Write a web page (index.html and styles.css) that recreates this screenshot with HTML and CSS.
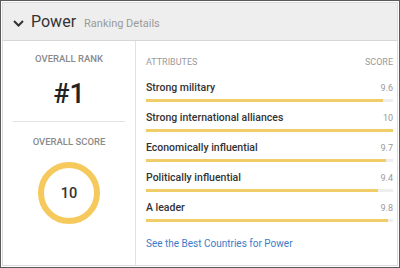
FILE: index.html
```html
<!DOCTYPE html>
<html lang="en">
<head>
  <meta charset="UTF-8" />
  <title>Power Ranking Details</title>
  <link rel="stylesheet" href="styles.css">
</head>
<body>
  <div class="frame">
    <div class="panel">

      <!-- HEADER -->
      <div class="panel-header">
        <svg class="chevron" width="11" height="7" viewBox="0 0 11 7">
          <polyline points="1,1 5.5,5.5 10,1" fill="none" stroke="#333" stroke-width="2"/>
        </svg>
        <span class="title">Power</span>
        <span class="subtitle">Ranking Details</span>
      </div>

      <div class="panel-body">
        <!-- LEFT SIDE -->
        <div class="summary">
          <div class="summary-block">
            <div class="label">Overall Rank</div>
            <div class="rank">#1</div>
          </div>
          <div class="summary-block score-block">
            <div class="label">Overall Score</div>
            <div class="ring">10</div>
          </div>
        </div>

        <!-- RIGHT SIDE -->
        <div class="attributes">
          <div class="attr-head">
            <span>Attributes</span>
            <span>Score</span>
          </div>

          <div class="attr">
            <div class="attr-row"><span class="attr-name">Strong military</span><span class="attr-score">9.6</span></div>
            <div class="bar"><div class="fill" style="width: 96%"></div></div>
          </div>
          <div class="attr">
            <div class="attr-row"><span class="attr-name">Strong international alliances</span><span class="attr-score">10</span></div>
            <div class="bar"><div class="fill" style="width: 100%"></div></div>
          </div>
          <div class="attr">
            <div class="attr-row"><span class="attr-name">Economically influential</span><span class="attr-score">9.7</span></div>
            <div class="bar"><div class="fill" style="width: 97%"></div></div>
          </div>
          <div class="attr">
            <div class="attr-row"><span class="attr-name">Politically influential</span><span class="attr-score">9.4</span></div>
            <div class="bar"><div class="fill" style="width: 94%"></div></div>
          </div>
          <div class="attr">
            <div class="attr-row"><span class="attr-name">A leader</span><span class="attr-score">9.8</span></div>
            <div class="bar"><div class="fill" style="width: 98%"></div></div>
          </div>

          <a class="more-link" href="#">See the Best Countries for Power</a>
        </div>
      </div>

    </div>
  </div>
</body>
</html>
```

FILE: styles.css
```css
* {
  box-sizing: border-box;
}

body {
  margin: 0;
  font-family: Roboto, 'Noto Sans', sans-serif;
  background: #fff;
}

.frame {
  width: 400px;
  height: 268px;
  border: 1px solid #5a5a5a;
  padding: 1px;
  background: #fff;
}

.panel {
  height: 100%;
  border: 1px solid #dcdcdc;
  display: flex;
  flex-direction: column;
}

.panel-header {
  height: 38px;
  background: #eeeeee;
  border-bottom: 1px solid #d6d6d6;
  display: flex;
  align-items: baseline;
  padding: 9px 0 0 9px;
}

.chevron {
  align-self: center;
  margin: -6px 7px 0 1px;
}

.title {
  font-size: 16px;
  color: #333;
  margin-right: 8px;
}

.subtitle {
  font-size: 11px;
  color: #9a9a9a;
}

.panel-body {
  flex: 1;
  display: flex;
}

.summary {
  width: 133px;
  border-right: 1px solid #e2e2e2;
  padding: 0 10px;
}

.summary-block {
  text-align: center;
  padding-top: 12px;
}

.summary-block:first-child {
  height: 81px;
  border-bottom: 1px solid #e2e2e2;
}

.label {
  font-size: 9.5px;
  font-weight: 500;
  text-transform: uppercase;
  color: #8a8a8a;
}

.rank {
  font-size: 27px;
  font-weight: 500;
  color: #222;
  margin-top: 14px;
}

.score-block {
  padding-top: 14px;
}

.ring {
  width: 62px;
  height: 62px;
  margin: 15px auto 0;
  border: 6px solid #f5c95c;
  border-radius: 50%;
  display: flex;
  align-items: center;
  justify-content: center;
  font-size: 14.5px;
  font-weight: 500;
  color: #333;
}

.attributes {
  flex: 1;
  padding: 16px 4px 0 10px;
}

.attr-head {
  display: flex;
  justify-content: space-between;
  font-size: 9px;
  text-transform: uppercase;
  color: #9a9a9a;
  margin-bottom: 14px;
}

.attr {
  margin-bottom: 9px;
}

.attr-row {
  display: flex;
  justify-content: space-between;
  align-items: baseline;
}

.attr-name {
  font-size: 10.5px;
  font-weight: 500;
  color: #333;
}

.attr-score {
  font-size: 9px;
  color: #999;
}

.bar {
  height: 3px;
  background: #eeeeee;
  margin-top: 5px;
}

.fill {
  height: 100%;
  background: #f0cd68;
}

.more-link {
  display: inline-block;
  margin-top: 7px;
  font-size: 10px;
  color: #3d7cc9;
  text-decoration: none;
}
```
